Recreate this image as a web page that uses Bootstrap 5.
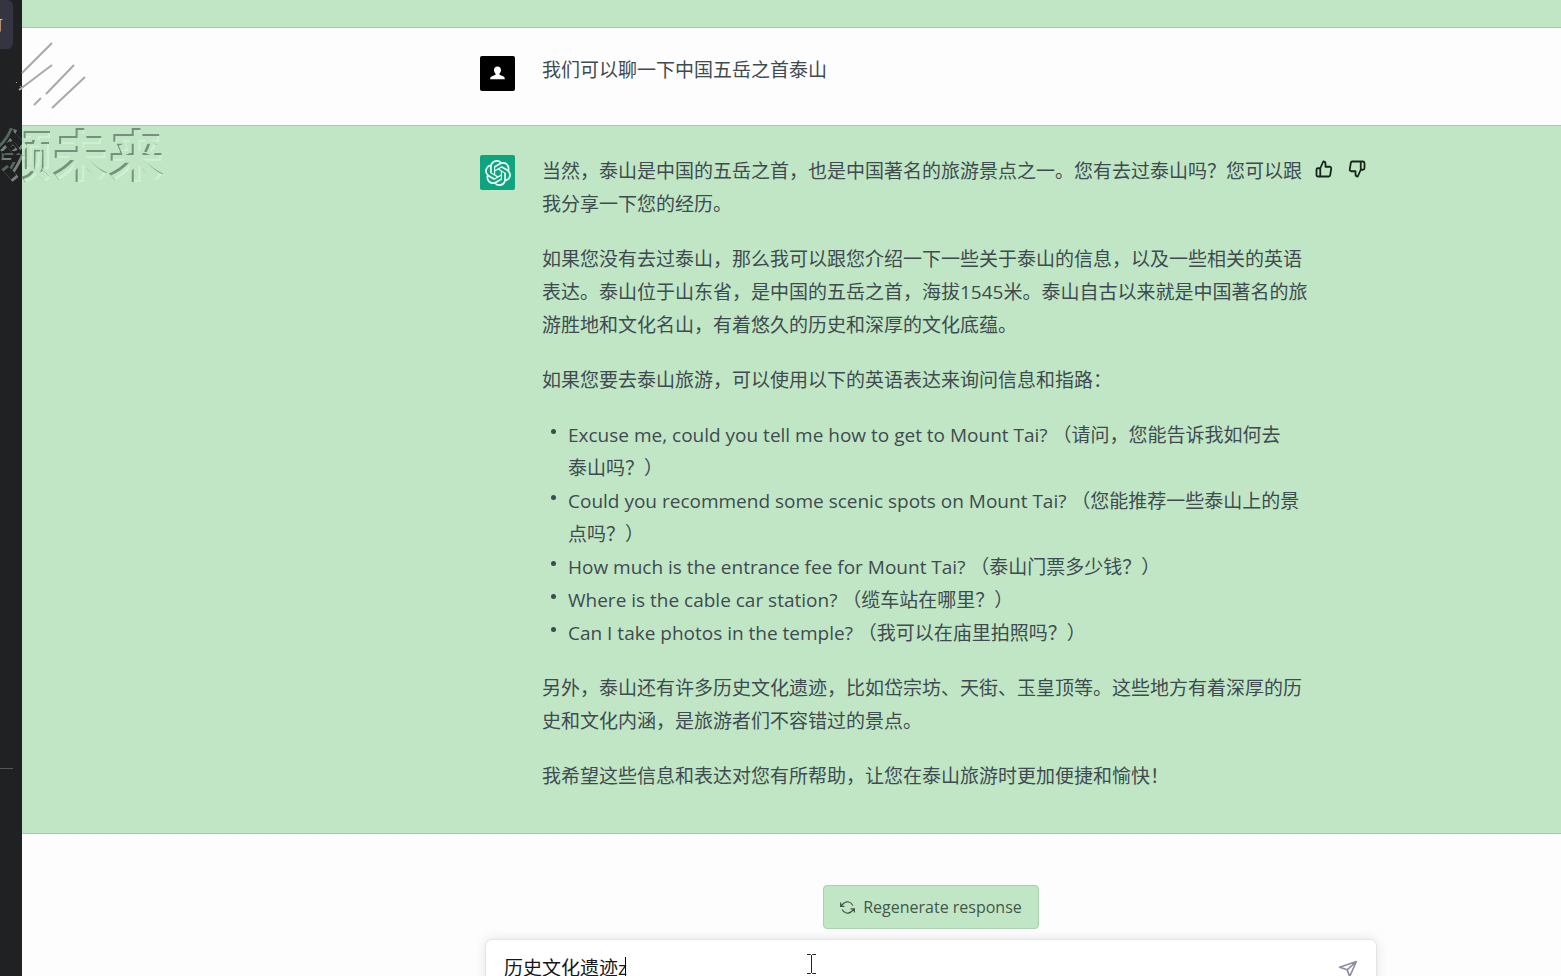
<!DOCTYPE html>
<html lang="zh-CN">
<head>
<meta charset="utf-8">
<meta name="viewport" content="width=device-width, initial-scale=1">
<title>泰山旅游</title>
<link href="https://cdn.jsdelivr.net/npm/bootstrap@5.3.0/dist/css/bootstrap.min.css" rel="stylesheet">
<style>
  :root { --chat-green: #c0e6c5; --chat-line: #a3cbaa; --chat-ink: #3f4b50; }
  body { font-family: "Open Sans", "Noto Sans CJK SC", sans-serif; font-size: 19px; line-height: 33px; color: var(--chat-ink); background: #fdfdfd; }
  .side-strip { width: 22px; background: #202123; color: #c5c5d2; }
  .side-item { width: 13px; height: 49px; padding: 0 10px 0 0; background: #343541; border-radius: 0 6px 6px 0; color: inherit; font-size: 14px; direction: rtl; }
  .side-rule { width: 13px; height: 1px; margin-bottom: 207px; background: #56575c; }
  .thread-grid { display: grid; grid-template-columns: 458fr minmax(0, 902px) 179fr; }
  .thread-grid > * { grid-column: 2; }
  .turn { border-bottom: 1px solid var(--chat-line); }
  .turn-green { background: var(--chat-green); }
  .turn-prev { height: 28px; }
  .turn-user { padding: 28px 0 34px; }
  .turn-user p { margin-top: -2px; }
  .turn-reply { padding: 29px 0 40px; }
  .avatar { width: 35px; height: 35px; border-radius: 2px; margin-right: 27px; }
  .avatar-user { background: #000; }
  .avatar-bot { background: #10a37f; }
  .msg { width: 768px; }
  .msg p, .msg ul { margin-bottom: 22px; }
  .msg ul { padding-left: 26px; list-style: none; }
  .msg li { position: relative; }
  .msg li::before { content: ""; position: absolute; left: -17px; top: 10px; width: 5px; height: 5px; border-radius: 50%; background: var(--chat-ink); }
  .votes { padding: 5px 0 0 5px; }
  .vote { width: 18px; height: 18px; margin-right: 15px; color: #17251a; }
  .regen { height: 44px; margin-top: 51px; padding: 0 14px; gap: 8px; background: var(--chat-green); border: 1px solid #a9d0af; color: #44574a; font-size: 16px; border-radius: 4px; padding: 0 16px; }
  .composer { margin: 10px 5px 0; height: 66px; border: 1px solid #e4e4e6; border-radius: 7px; background: #fff; box-shadow: 0 0 12px rgba(0,0,0,.1); }
  .composer textarea { resize: none; border: 0; outline: 0; background: transparent; color: #17171a; padding: 12px 18px; line-height: 33px; overflow: hidden; }
  .caret-bar { left: 139px; top: 17px; width: 1px; height: 24px; background: #000; }
  .ibeam { left: 320px; top: 14px; }
  .send { right: 18px; top: 19px; color: #8e8ea0; }
  .wm-mark { left: 14px; top: 40px; }
  .wm-text { left: -4px; top: 124px; font: 900 56px/56px "Noto Sans CJK SC", sans-serif; filter: url(#emboss); }
</style>
</head>
<body class="vh-100 overflow-hidden position-relative">
<div class="d-flex h-100">
  <aside class="side-strip d-flex flex-column justify-content-between flex-shrink-0">
    <button class="side-item border-0 overflow-hidden text-nowrap" type="button">可</button>
    <div class="side-rule"></div>
  </aside>
  <main class="flex-grow-1 overflow-hidden">
    <div class="turn turn-green turn-prev"></div>
    <section class="turn turn-user thread-grid">
      <div class="d-flex align-items-start">
        <span class="avatar avatar-user d-flex align-items-center justify-content-center flex-shrink-0">
          <svg width="17" height="17" viewBox="0 0 17 17" fill="#fff" aria-hidden="true"><path d="M8.500 1.500c2.300 0 3.500 1.600 3.500 3.600 0 1.500-.6 2.700-1.500 3.500v1.200l4 1.700c1 .5 1.300 1.200 1.300 2.700H1.200c0-1.500.3-2.200 1.300-2.700l4-1.700V8.600C5.600 7.800 5 6.600 5 5.100c0-2 1.200-3.600 3.500-3.600z"/></svg>
        </span>
        <div class="msg"><p class="mb-0">我们可以聊一下中国五岳之首泰山</p></div>
      </div>
    </section>
    <section class="turn turn-green turn-reply thread-grid">
      <div class="d-flex align-items-start">
        <span class="avatar avatar-bot d-flex align-items-center justify-content-center flex-shrink-0">
          <svg width="26" height="26" viewBox="0 0 24 24" fill="#e9fff5" aria-hidden="true"><path d="M22.2819 9.8211a5.9847 5.9847 0 0 0-.5157-4.9108 6.0462 6.0462 0 0 0-6.5098-2.9A6.0651 6.0651 0 0 0 4.9807 4.1818a5.9847 5.9847 0 0 0-3.9977 2.9 6.0462 6.0462 0 0 0 .7427 7.0966 5.98 5.98 0 0 0 .511 4.9107 6.051 6.051 0 0 0 6.5146 2.9001A5.9847 5.9847 0 0 0 13.2599 24a6.0557 6.0557 0 0 0 5.7718-4.2058 5.9894 5.9894 0 0 0 3.9977-2.9001 6.0557 6.0557 0 0 0-.7475-7.0729zm-9.022 12.6081a4.4755 4.4755 0 0 1-2.8764-1.0408l.1419-.0804 4.7783-2.7582a.7948.7948 0 0 0 .3927-.6813v-6.7369l2.02 1.1686a.071.071 0 0 1 .038.052v5.5826a4.504 4.504 0 0 1-4.4945 4.4944zm-9.6607-4.1254a4.4708 4.4708 0 0 1-.5346-3.0137l.142.0852 4.783 2.7582a.7712.7712 0 0 0 .7806 0l5.8428-3.3685v2.3324a.0804.0804 0 0 1-.0332.0615L9.74 19.9502a4.4992 4.4992 0 0 1-6.1408-1.6464zM2.3408 7.8956a4.485 4.485 0 0 1 2.3655-1.9728V11.6a.7664.7664 0 0 0 .3879.6765l5.8144 3.3543-2.0201 1.1685a.0757.0757 0 0 1-.071 0l-4.8303-2.7865A4.504 4.504 0 0 1 2.3408 7.872zm16.5963 3.8558L13.1038 8.364 15.1192 7.2a.0757.0757 0 0 1 .071 0l4.8303 2.7913a4.4944 4.4944 0 0 1-.6765 8.1042v-5.6772a.79.79 0 0 0-.407-.667zm2.0107-3.0231l-.142-.0852-4.7735-2.7818a.7759.7759 0 0 0-.7854 0L9.409 9.2297V6.8974a.0662.0662 0 0 1 .0284-.0615l4.8303-2.7866a4.4992 4.4992 0 0 1 6.6802 4.66zM8.3065 12.863l-2.02-1.1638a.0804.0804 0 0 1-.038-.0567V6.0742a4.4992 4.4992 0 0 1 7.3757-3.4537l-.142.0805L8.704 5.459a.7948.7948 0 0 0-.3927.6813zm1.0976-2.3654l2.602-1.4998 2.6069 1.4998v2.9994l-2.5974 1.4997-2.6067-1.4997Z"/></svg>
        </span>
        <div class="msg flex-shrink-0">
          <p>当然，泰山是中国的五岳之首，也是中国著名的旅游景点之一。您有去过泰山吗？您可以跟我分享一下您的经历。</p>
          <p>如果您没有去过泰山，那么我可以跟您介绍一下一些关于泰山的信息，以及一些相关的英语表达。泰山位于山东省，是中国的五岳之首，海拔1545米。泰山自古以来就是中国著名的旅游胜地和文化名山，有着悠久的历史和深厚的文化底蕴。</p>
          <p>如果您要去泰山旅游，可以使用以下的英语表达来询问信息和指路：</p>
          <ul>
            <li>Excuse me, could you tell me how to get to Mount Tai? （请问，您能告诉我如何去<span class="text-nowrap">泰山吗？）</span></li>
            <li>Could you recommend some scenic spots on Mount Tai? （您能推荐一些泰山上的景<span class="text-nowrap">点吗？）</span></li>
            <li>How much is the entrance fee for Mount Tai? （泰山门票多少钱？）</li>
            <li>Where is the cable car station? （缆车站在哪里？）</li>
            <li>Can I take photos in the temple? （我可以在庙里拍照吗？）</li>
          </ul>
          <p>另外，泰山还有许多历史文化遗迹，比如岱宗坊、天街、玉皇顶等。这些地方有着深厚的历史和文化内涵，是旅游者们不容错过的景点。</p>
          <p class="mb-0">我希望这些信息和表达对您有所帮助，让您在泰山旅游时更加便捷和愉快！</p>
        </div>
        <div class="votes d-flex">
          <button class="vote btn border-0 p-0 d-flex" type="button" aria-label="赞"><svg width="18" height="18" viewBox="0 0 24 24" fill="none" stroke="currentColor" stroke-width="2.400" stroke-linejoin="round"><path d="M14 9V5a3 3 0 0 0-3-3l-4 9v11h11.280a2 2 0 0 0 2-1.700l1.380-9a2 2 0 0 0-2-2.300zM7 22H4a2 2 0 0 1-2-2v-7a2 2 0 0 1 2-2h3"/></svg></button>
          <button class="vote btn border-0 p-0 d-flex" type="button" aria-label="踩"><svg width="18" height="18" viewBox="0 0 24 24" fill="none" stroke="currentColor" stroke-width="2.400" stroke-linejoin="round"><path d="M10 15v4a3 3 0 0 0 3 3l4-9V2H5.720a2 2 0 0 0-2 1.700l-1.380 9a2 2 0 0 0 2 2.300zm7-13h2.670A2.310 2.310 0 0 1 22 4v7a2.310 2.310 0 0 1-2.330 2H17"/></svg></button>
        </div>
      </div>
    </section>
    <form class="thread-grid">
      <div>
        <div class="d-flex justify-content-center">
          <button class="regen btn d-flex align-items-center" type="button">
            <svg width="15" height="15" viewBox="0 0 24 24" fill="none" stroke="currentColor" stroke-width="2" aria-hidden="true"><path d="M1 4v6h6M23 20v-6h-6M20.490 9A9 9 0 0 0 5.640 5.640L1 10m22 4-4.640 4.360A9 9 0 0 1 3.510 15"/></svg>
            Regenerate response
          </button>
        </div>
        <div class="composer position-relative">
          <textarea class="w-100 h-100 d-block" aria-label="消息" spellcheck="false">历史文化遗迹z</textarea>
          <span class="caret-bar position-absolute"></span>
          <svg class="ibeam position-absolute" width="11" height="20" viewBox="0 0 11 20" fill="none" stroke="#222" aria-hidden="true"><path d="M1 .5h3.500l1 1 1-1H10M5.500 1v18M1 19.500h3.500l1-1 1 1H10"/></svg>
          <button class="send btn border-0 p-0 d-flex position-absolute" type="submit" aria-label="发送"><svg width="20" height="20" viewBox="0 0 24 24" fill="none" stroke="currentColor" stroke-width="2" stroke-linejoin="round"><path d="M22 3 14 21l-3-8-9-3zM22 3 11 13"/></svg></button>
        </div>
      </div>
    </form>
  </main>
</div>
<svg class="position-absolute top-0" width="0" height="0" aria-hidden="true">
  <filter id="emboss" color-interpolation-filters="sRGB">
    <feOffset in="SourceAlpha" dx="2" dy="2" result="low"/>
    <feOffset in="SourceAlpha" dx="-2" dy="-2" result="high"/>
    <feFlood flood-color="#647a6b" flood-opacity=".8"/>
    <feComposite in2="SourceAlpha" operator="in"/>
    <feComposite in2="low" operator="out" result="dark"/>
    <feFlood flood-color="#e2fbe5" flood-opacity=".45"/>
    <feComposite in2="SourceAlpha" operator="in"/>
    <feComposite in2="high" operator="out" result="light"/>
    <feMerge><feMergeNode in="light"/><feMergeNode in="dark"/></feMerge>
  </filter>
</svg>
<svg class="wm-mark position-absolute" width="80" height="80" viewBox="0 0 80 80" fill="none" stroke="#a9a9ac" stroke-width="2" aria-hidden="true"><path d="M38 3 8 33M38 25 5 50M60 25 32 54M27 58l-7 7M71 37 38 68"/><path d="M42 5 76 37 38 77M2 42l34 36" stroke="#eeeef0" stroke-width="1" stroke-dasharray="1 5"/></svg>
<div class="wm-text position-absolute text-nowrap" aria-hidden="true">领未来</div>
<script src="https://cdn.jsdelivr.net/npm/bootstrap@5.3.0/dist/js/bootstrap.bundle.min.js"></script>
</body>
</html>
